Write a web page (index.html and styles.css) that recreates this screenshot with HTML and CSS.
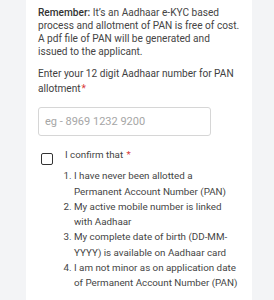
FILE: index.html
```html
<!DOCTYPE html>
<html>
<head>
<meta charset="utf-8">
<link rel="stylesheet" href="styles.css">
</head>
<body>
<div class="card">
  <p class="note"><span class="strong">Remember:</span> It’s an Aadhaar e-KYC based process and allotment of PAN is free of cost. A pdf file of PAN will be generated and issued to the applicant.</p>
  <label class="label">Enter your 12 digit Aadhaar number for PAN allotment<span class="req">*</span></label>
  <input class="field" type="text" placeholder="eg - 8969 1232 9200">
  <div class="confirm">
    <span class="box"></span>
    <div class="confirm-body">
      <div class="confirm-title">I confirm that <span class="req">*</span></div>
      <ol class="terms">
        <li>I have never been allotted a Permanent Account Number (PAN)</li>
        <li>My active mobile number is linked with Aadhaar</li>
        <li>My complete date of birth (DD-MM-YYYY) is available on Aadhaar card</li>
        <li>I am not minor as on application date of Permanent Account Number (PAN)</li>
      </ol>
    </div>
  </div>
</div>
</body>
</html>
```

FILE: styles.css
```css
html, body {
  margin: 0;
  padding: 0;
  background: #f3f4f6;
  height: 300px;
  overflow: hidden;
}
body {
  font-family: Roboto, "Liberation Sans", sans-serif;
  color: #454545;
}
.card {
  margin-left: 26px;
  width: 226px;
  height: 300px;
  background: #ffffff;
  box-sizing: border-box;
  padding: 6px 11px 0 12px;
}
.note {
  margin: 0;
  font-size: 10.15px;
  line-height: 13px;
}
.strong {
  font-weight: 500;
  color: #333;
}
.label {
  display: block;
  margin-top: 8px;
  font-size: 10.1px;
  line-height: 15px;
  color: #3f3f3f;
}
.req {
  color: #d93a3a;
  margin-left: 1px;
}
.field {
  display: block;
  margin: 11px 0 0 0;
  width: 173px;
  height: 29px;
  box-sizing: border-box;
  border: 1px solid #d6d6d6;
  border-radius: 3px;
  padding: 0 6px;
  font-family: Roboto, "Liberation Sans", sans-serif;
  font-size: 11px;
  outline: none;
}
.field::placeholder {
  color: #a6a6a6;
}
.confirm {
  display: flex;
  align-items: flex-start;
  margin-top: 11px;
}
.box {
  flex: none;
  width: 12px;
  height: 12px;
  box-sizing: border-box;
  border: 1.5px solid #333;
  border-radius: 2px;
  margin: 6px 0 0 3px;
}
.confirm-body {
  flex: 1;
  margin: 0 0 0 12px;
  font-size: 9.8px;
  line-height: 15.3px;
}
.confirm-title {
  margin-bottom: 6px;
}
.terms {
  margin: 0;
  padding-left: 9px;
}
```
